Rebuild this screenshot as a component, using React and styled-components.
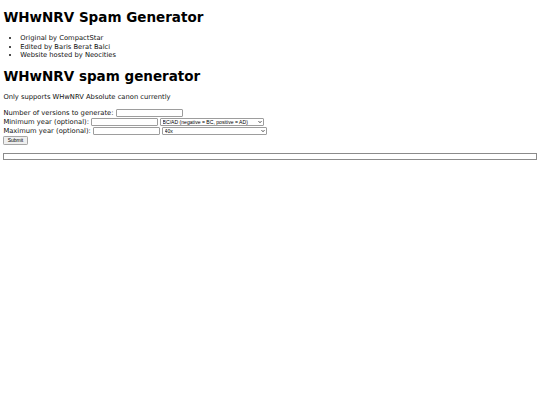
import React from 'react'
import styled, { createGlobalStyle } from 'styled-components'

const GlobalStyle = createGlobalStyle`
body{
    margin: 0;
    background: #fff;
    color: #111;
    font-family: "DejaVu Sans", Verdana, sans-serif;
    font-size: 6.75px;
    line-height: 8.2px;
}
`

const Page = styled.main`
padding : 0 3.4px;
`

const Title = styled.h1`
font-size : 13.5px;
line-height : 16.4px;
font-weight : bold;
color : #000;
margin : 9px 0;
`

const Credits = styled.ul`
margin : 6.75px 0;
padding-left : 16.9px;
li{
    line-height : 8.2px;
}
`

const Note = styled.p`
margin : 6.75px 0;
`

const Form = styled.form`
display : flex;
flex-direction: column;
align-items: flex-start;
margin : 6.75px 0 0;
`

const Row = styled.div`
display : flex;
align-items: center;
gap : 2.1px;
height : 9px;
`

const TextInput = styled.input`
box-sizing : border-box;
width : 67px;
height : 8.6px;
padding : 0 1px;
border : 1px solid #9d9d9d;
border-radius : 1px;
background : #fff;
font : 5.6px "Liberation Sans", Arial, sans-serif;
`

const PickerWrap = styled.span`
position : relative;
display : inline-flex;
svg{
    position : absolute;
    right : 2px;
    top : 50%;
    transform : translateY(-50%);
    pointer-events : none;
}
`

const Picker = styled.select`
appearance : none;
box-sizing : border-box;
width : ${props => props.$width}px;
height : 7.6px;
padding : 0 6px 0 1.5px;
border : 1px solid #9d9d9d;
border-radius : 1px;
background : #fff;
color : #000;
font : 5.1px "Liberation Sans", Arial, sans-serif;
`

const SubmitButton = styled.button`
box-sizing : border-box;
height : 8.6px;
margin-top : 0.6px;
padding : 0 3.3px;
border : 1px solid #a5a5a5;
border-radius : 1.2px;
background : #efefef;
color : #000;
font : 5px "Liberation Sans", Arial, sans-serif;
line-height : 1;
`

const OutputBox = styled.div`
box-sizing : border-box;
height : 7px;
margin-top : 8.6px;
border : 1px solid #8b8b8b;
`

const Chevron = () => (
    <svg width="4" height="3" viewBox="0 0 8 6">
        <path d="M1 1.2 L4 4.4 L7 1.2" fill="none" stroke="#222" strokeWidth="1.6" />
    </svg>
)

const Select = ({ width, children, ...rest }) => (
    <PickerWrap>
        <Picker $width={width} {...rest}>
            {children}
        </Picker>
        <Chevron />
    </PickerWrap>
)

const App = () => {
    return (
        <>
            <GlobalStyle />
            <Page>
                <Title>WHwNRV Spam Generator</Title>
                <Credits>
                    <li>Original by CompactStar</li>
                    <li>Edited by Baris Berat Balci</li>
                    <li>Website hosted by Neocities</li>
                </Credits>
                <Title>WHwNRV spam generator</Title>
                <Note>Only supports WHwNRV Absolute canon currently</Note>
                <Form onSubmit={eve => eve.preventDefault()}>
                    <Row>
                        Number of versions to generate:
                        <TextInput type="text" />
                    </Row>
                    <Row>
                        Minimum year (optional):
                        <TextInput type="text" />
                        <Select width={104} defaultValue="bcad">
                            <option value="bcad">BC/AD (negative = BC, positive = AD)</option>
                        </Select>
                    </Row>
                    <Row>
                        Maximum year (optional):
                        <TextInput type="text" />
                        <Select width={105} defaultValue="40x">
                            <option value="40x">40x</option>
                        </Select>
                    </Row>
                    <SubmitButton type="submit">Submit</SubmitButton>
                </Form>
                <OutputBox />
            </Page>
        </>
    )
}

export default App
